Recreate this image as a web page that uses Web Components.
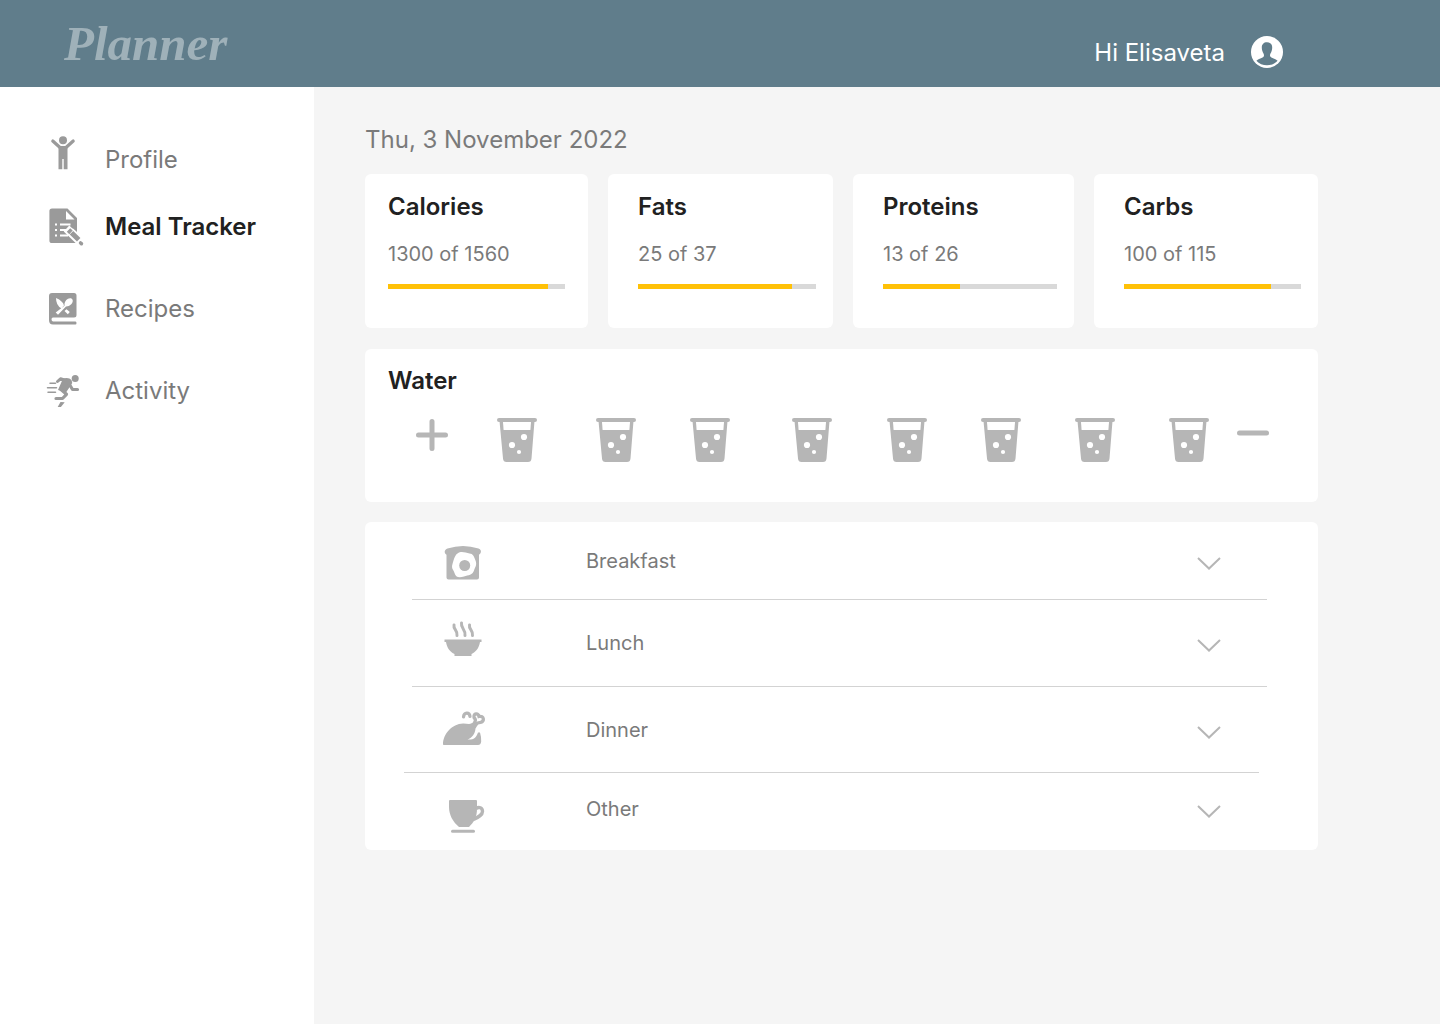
<!DOCTYPE html>
<html lang="en">
<head>
<meta charset="utf-8">
<title>Planner – Meal Tracker</title>
<style>
  body { margin: 0; font-family: Inter, "Liberation Sans", sans-serif; color: #7a7a7a; background: #f5f5f5; }
</style>
</head>
<body>
<planner-app></planner-app>

<template id="app-template">
  <style>
    :host { display: flex; flex-direction: column; min-height: 100vh; }
    .body { display: flex; flex: 1; }
    main { flex: 1; min-width: 0; padding: 37px 122px 36px 51px; }
    h1 { margin: 0 0 18px; font-size: 24px; line-height: 32px; font-weight: 400; }
    .nutrients { display: grid; grid-template-columns: 223fr 225fr 221fr 224fr; gap: 20px; margin-bottom: 21px; }
    .nutrients > :not(:first-child) { --inset: 30px; --inset-end: 17px; }
    water-tracker { margin-bottom: 20px; }
  </style>
  <app-header user="Elisaveta"></app-header>
  <div class="body">
    <side-nav>
      <nav-item icon="person">Profile</nav-item>
      <nav-item icon="note" current>Meal Tracker</nav-item>
      <nav-item icon="book">Recipes</nav-item>
      <nav-item icon="runner">Activity</nav-item>
    </side-nav>
    <main>
      <h1>Thu, 3 November 2022</h1>
      <section class="nutrients">
        <nutrient-card name="Calories" value="1300" goal="1560" fill="90.4"></nutrient-card>
        <nutrient-card name="Fats" value="25" goal="37" fill="86.5"></nutrient-card>
        <nutrient-card name="Proteins" value="13" goal="26" fill="44"></nutrient-card>
        <nutrient-card name="Carbs" value="100" goal="115" fill="83"></nutrient-card>
      </section>
      <water-tracker glasses="8"></water-tracker>
      <meal-list>
        <meal-row icon="toast">Breakfast</meal-row>
        <meal-row icon="bowl" class="tall">Lunch</meal-row>
        <meal-row icon="poultry" class="tall outdent">Dinner</meal-row>
        <meal-row icon="cup" class="last">Other</meal-row>
      </meal-list>
    </main>
  </div>
</template>

<script>
const ICONS = {
  person: ['0 4 24 40', '<circle cx="12" cy="4.200" r="4"/><path d="M1.800 5 9 11.500h6L22.200 5" fill="none" stroke="currentColor" stroke-width="3.200" stroke-linecap="round" stroke-linejoin="round"/><path d="M7.500 10h9v23.200h-3.800V23h-1.400v10.200H7.500z"/>'],
  note: ['-4 0 36 38', '<path d="M3 .5h15.500L28 10v14l-4-3.500-4.500 1 1 4.500 9 9H3q-2.600 0-2.600-2.600V3.100Q.4.500 3 .5z"/><path d="M17 3v8.500h8.500z" fill="#fff"/><path d="M6 16.500h2M11 16.500h10.500M6 22h2M11 22h7M6 27.500h2M11 27.500h8" stroke="#fff" stroke-width="2" fill="none"/><path d="M17.500 20.500 32 34.500" stroke="#fff" stroke-width="8"/><path d="m19.500 22 2.500 2.300M22.500 24.800l7.200 7" stroke="currentColor" stroke-width="5"/><path d="m31.600 35 .8.700" stroke="currentColor" stroke-width="3.600" stroke-linecap="round"/>'],
  book: ['0 0 28 32', '<path d="M3 0h22q2.500 0 2.500 2.500V22q0 2.500-2.500 2.500H4q-1.500 0-1.500 1.700T4 28.500h22.500q1 0 1 1.500t-1 1.500H4q-4 0-4-4.500V3Q0 0 3 0z"/><path d="M3 26.800h24" stroke="#fff" stroke-width="2.300"/><path d="M7 5Q14 8 15 12.500l-2.700 2.700Q7 12.500 7 5zM15.500 12.700q-.5-4.400 3.500-6.900c3-1.800 6 .7 4.300 3.900-2 3.500-5.500 3.700-6.300 3.700L9 21.800l-2.300-2.300zM15.500 18l2-1.800 3.300 2.800-2 2.300z" fill="#fff"/>'],
  runner: ['0 0 34 34', '<circle cx="29.200" cy="4.500" r="3.500"/><path d="M11.500 7.500 14.500 4.800l7 2.200" fill="none" stroke="currentColor" stroke-width="3" stroke-linecap="round" stroke-linejoin="round"/><path d="M17 4.500q6-1.500 8.500 1.500 1.500 2.500-.5 5L20 18.500l-8-2.500z"/><path d="m23.500 10.500 3 5H31.500M15 15.500l5.500 4.800-4 4.200H10" fill="none" stroke="currentColor" stroke-width="3.200" stroke-linecap="round" stroke-linejoin="round"/><path d="M4 9.200H9.500M1.500 13.800h9M2 18.300H9.500" stroke="currentColor" stroke-width="1.500" stroke-linecap="round"/><path d="m14.500 28 4.200.2-3.800 4.900h-3.200z"/>'],
  avatar: ['0 0 32 32', '<circle cx="16" cy="16" r="16"/><path d="M16 6.300c3.200 0 5.200 2 5.200 5.200 0 1.700-.3 2.400-.5 3.300-.6 2.200-1.700 3-1.700 4.700 0 2.400 4 2.400 7.600 5.300C23.900 28 20 29.300 16 29.300S8.100 28 5.400 24.800C9 21.900 13 21.900 13 19.500c0-1.700-1.100-2.500-1.700-4.700-.2-.9-.5-1.600-.5-3.300 0-3.200 2-5.200 5.200-5.200z" fill="#607d8b"/>'],
  plus: ['0 0 32 32', '<path d="M2.500 17h27M16 3.500v27" stroke="currentColor" stroke-width="5" stroke-linecap="round"/>'],
  minus: ['0 0 32 32', '<path d="M2.500 15h27" stroke="currentColor" stroke-width="5" stroke-linecap="round"/>'],
  glass: ['0 0 40 44', '<rect width="40" height="4" rx="2"/><path d="M2.500 3h35l-3 37.500Q34.200 44 31 44H9.500Q6.300 44 6 40.500z"/><path d="M6 4h28l-.6 8H6.600z" fill="#fff"/><circle cx="27" cy="19" r="3.100" fill="#fff"/><circle cx="15" cy="27" r="3.100" fill="#fff"/><circle cx="22" cy="34" r="2.100" fill="#fff"/>'],
  toast: ['0 -1 48 48', '<path d="M8.500 10.500q15.500-5 31 0c3.200 1 3.200 4.500.5 6.200V39.500q0 2-2 2H9.500q-2 0-2-2V16.700c-2.700-1.700-2.200-5.200 1-6.200z"/><path d="M18.500 15.500c4-3 8-.5 12 0 3.500 0 4.500 3 6 7 1.700 4.500-.3 6.500-1.500 10-1.500 4.500-5.500 4.500-10 6-5.500 1.500-8.500.5-9.500-3.500-1-3.500-3.500-4.500-2-9 1.300-4 2-8.500 5-10.500z" fill="#fff"/><circle cx="25.700" cy="27.500" r="5.500"/>'],
  bowl: ['0 0 48 48', '<path d="M5.500 20.500h37V23H41c-1 6.500-4.500 10-8.500 12v2h-17v-2C11.500 33 8 29.500 7 23H5.500z"/><path d="M15 6c-1 4.500 4 5.500 3 10.500M22.500 4c-1 5 4.500 6.500 3.500 12.500M30.500 6c-1 4.500 4 5.500 3 10.500" fill="none" stroke="currentColor" stroke-width="3" stroke-linecap="round"/>'],
  poultry: ['0 -2 48 48', '<path d="M4 36.500C4 26 13 16 24 15.500c5-.1 8 2 11-2.500l4 3.500-2.500 4c-.5 5.500-3 9-8 11 6 .5 8.500-1.500 10.500-7H41q1.500 5 1.200 9-.4 3.500-3.200 3.500H6.500Q4 37 4 36.500z"/><path d="M24.500 9c.5-5 6-5 6.500-.5M36 13.500c1-1.500 0-3-1-4-.5-4.500 4-5 5-1 5-1.200 6 4.500 1.500 6-1.500.3-2.500-.3-3.500 1" fill="none" stroke="currentColor" stroke-width="3.200" stroke-linecap="round"/>'],
  cup: ['-1 0 48 48', '<path d="M10 15h26q1 0 1 1v8c0 8-3 13-8 18H19c-6-5-10-12-10-20v-6q0-1 1-1z"/><path d="M36 23.500c3-2 6.500-1 6.500 3 0 3.500-4 5.500-9 8" fill="none" stroke="currentColor" stroke-width="3.400"/><path d="M12.500 46.200h21" stroke="currentColor" stroke-width="3" stroke-linecap="round"/>'],
  chevron: ['0 0 24 14', '<path d="M1 1 12 11.500 23 1" fill="none" stroke="currentColor" stroke-width="2"/>']
};

class UiIcon extends HTMLElement {
  connectedCallback() {
    const [box, shapes] = ICONS[this.getAttribute('name')];
    const [, , w, h] = box.split(' ');
    this.attachShadow({ mode: 'open' }).innerHTML = `
      <style>:host { display: block; flex: none; } svg { display: block; fill: currentColor; overflow: visible; }</style>
      <svg viewBox="${box}" width="${w}" height="${h}" aria-hidden="true">${shapes}</svg>`;
  }
}

class AppHeader extends HTMLElement {
  connectedCallback() {
    this.attachShadow({ mode: 'open' }).innerHTML = `
      <style>
        :host { display: flex; justify-content: space-between; align-items: center; height: 87px; box-sizing: border-box; padding: 0 157px 0 64px; background: #607d8b; }
        .logo { font: italic 700 49px/60px "Liberation Serif", serif; color: #9fb1b9; text-decoration: none; }
        .user { display: flex; align-items: center; gap: 26px; padding-top: 17px; color: #fff; font-size: 24px; line-height: 32px; }
        .user span { padding-top: 2px; }
      </style>
      <a class="logo" href="#">Planner</a>
      <div class="user"><span>Hi ${this.getAttribute('user')}</span><ui-icon name="avatar"></ui-icon></div>`;
  }
}

class SideNav extends HTMLElement {
  connectedCallback() {
    this.attachShadow({ mode: 'open' }).innerHTML = `
      <style>
        :host { display: block; flex: none; width: 314px; background: #fff; }
        nav { display: grid; grid-template-rows: 67px 82px 82px 82px; align-items: start; padding: 53px 20px 0 45px; }
      </style>
      <nav aria-label="Main"><slot></slot></nav>`;
  }
}

class NavItem extends HTMLElement {
  connectedCallback() {
    const current = this.hasAttribute('current');
    this.attachShadow({ mode: 'open' }).innerHTML = `
      <style>
        :host { display: block; }
        a { display: grid; grid-template-columns: 36px 1fr; align-items: center; gap: 24px; height: 40px; color: inherit; text-decoration: none; font-size: 24px; line-height: 32px; }
        a[aria-current] { color: #212121; font-weight: 600; }
        ui-icon { justify-self: center; color: #9a9a9a; }
      </style>
      <a href="#" ${current ? 'aria-current="page"' : ''}><ui-icon name="${this.getAttribute('icon')}"></ui-icon><span><slot></slot></span></a>`;
  }
}

class NutrientCard extends HTMLElement {
  connectedCallback() {
    const get = key => this.getAttribute(key);
    this.attachShadow({ mode: 'open' }).innerHTML = `
      <style>
        :host { display: block; box-sizing: border-box; min-height: 154px; padding: 17px var(--inset-end, 23px) 16px var(--inset, 23px); border-radius: 6px; background: #fff; }
        h2 { margin: 0 0 15px; font-size: 24px; line-height: 32px; font-weight: 600; color: #212121; }
        p { margin: 0 0 14px; font-size: 20px; line-height: 32px; }
        .track { height: 5px; background: #d9d9d9; }
        .fill { height: 100%; width: ${get('fill')}%; background: #ffc107; }
      </style>
      <h2>${get('name')}</h2>
      <p>${get('value')} of ${get('goal')}</p>
      <div class="track" role="progressbar" aria-label="${get('name')}" aria-valuenow="${get('value')}" aria-valuemax="${get('goal')}"><div class="fill"></div></div>`;
  }
}

class WaterTracker extends HTMLElement {
  connectedCallback() {
    const glasses = '<ui-icon name="glass"></ui-icon>'.repeat(Number(this.getAttribute('glasses')));
    this.attachShadow({ mode: 'open' }).innerHTML = `
      <style>
        :host { display: block; box-sizing: border-box; min-height: 153px; padding: 16px 49px 40px 23px; border-radius: 6px; background: #fff; }
        h2 { margin: 0 0 21px; font-size: 24px; line-height: 32px; font-weight: 600; color: #212121; }
        .strip { display: grid; grid-template-columns: 81fr 99fr 94fr 102fr 95fr 94fr 94fr 94fr 68fr 32px; padding-left: 28px; color: #b6b6b6; }
        button { display: block; width: 32px; height: 32px; padding: 0; border: 0; background: none; color: inherit; cursor: pointer; }
      </style>
      <h2>Water</h2>
      <div class="strip">
        <button type="button" aria-label="Add a glass"><ui-icon name="plus"></ui-icon></button>
        ${glasses}
        <button type="button" aria-label="Remove a glass"><ui-icon name="minus"></ui-icon></button>
      </div>`;
  }
}

class MealList extends HTMLElement {
  connectedCallback() {
    this.attachShadow({ mode: 'open' }).innerHTML = `
      <style>:host { display: block; padding: 0 51px 6px 47px; border-radius: 6px; background: #fff; }</style>
      <slot></slot>`;
  }
}

class MealRow extends HTMLElement {
  connectedCallback() {
    this.attachShadow({ mode: 'open' }).innerHTML = `
      <style>
        :host { display: block; border-bottom: 1px solid #d3d3d3; }
        :host(.last) { border-bottom: 0; }
        :host(.outdent) { margin: 0 8px 0 -8px; }
        :host(.outdent) button { margin-left: 8px; }
        button { display: grid; grid-template-columns: 48px 1fr 24px; column-gap: 99px; align-items: center; width: 100%; height: 77px; padding: 0 46px 0 27px; border: 0; background: none; font: inherit; font-size: 20px; line-height: 24px; color: inherit; text-align: left; cursor: pointer; }
        :host(.tall) button { height: 86px; }
        :host(.outdent) button { height: 85px; }
        :host(.last) button { height: 71px; }
        ui-icon { color: #b6b6b6; }
        ui-icon[name="chevron"] { margin-top: 6px; }
      </style>
      <button type="button" aria-expanded="false">
        <ui-icon name="${this.getAttribute('icon')}"></ui-icon>
        <span><slot></slot></span>
        <ui-icon name="chevron"></ui-icon>
      </button>`;
  }
}

class PlannerApp extends HTMLElement {
  connectedCallback() {
    this.attachShadow({ mode: 'open' }).append(document.getElementById('app-template').content.cloneNode(true));
  }
}

customElements.define('ui-icon', UiIcon);
customElements.define('app-header', AppHeader);
customElements.define('side-nav', SideNav);
customElements.define('nav-item', NavItem);
customElements.define('nutrient-card', NutrientCard);
customElements.define('water-tracker', WaterTracker);
customElements.define('meal-list', MealList);
customElements.define('meal-row', MealRow);
customElements.define('planner-app', PlannerApp);
</script>
</body>
</html>
